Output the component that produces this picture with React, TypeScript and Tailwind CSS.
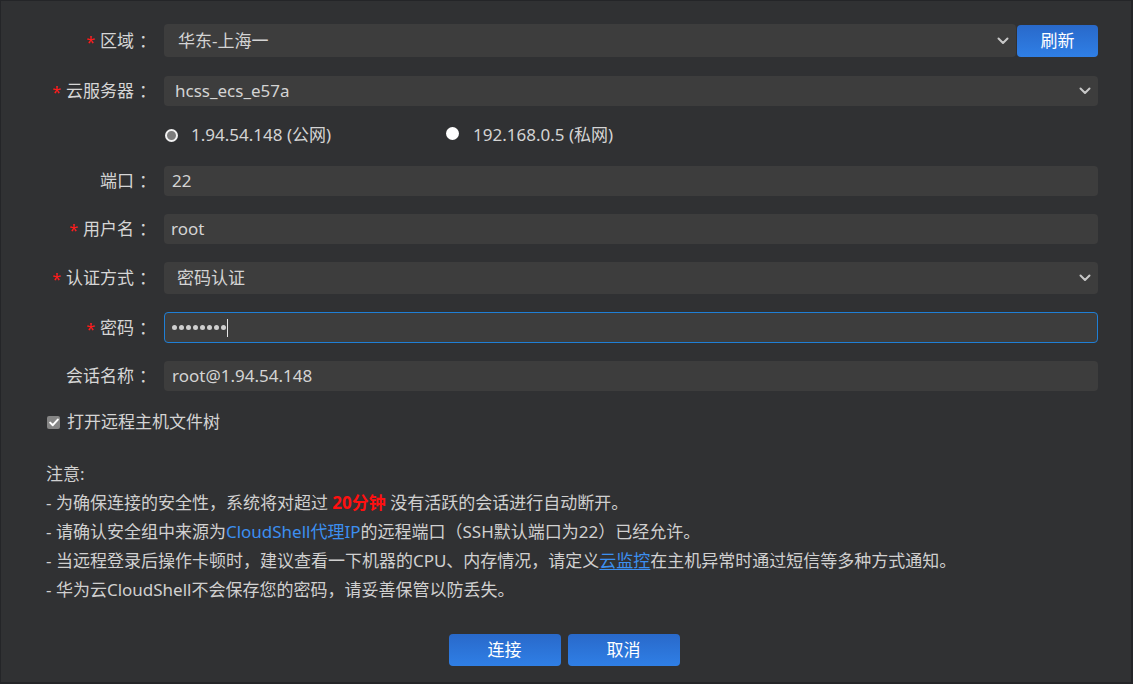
import React from "react";

const FONT = { fontFamily: '"Noto Sans", "Noto Sans CJK SC", sans-serif' };

function Chevron() {
  return (
    <svg width="12" height="8" viewBox="0 0 12 8" className="shrink-0">
      <path d="M1.5 1.5 L6 6 L10.5 1.5" fill="none" stroke="#c8c8c8" strokeWidth="2" strokeLinecap="round" strokeLinejoin="round" />
    </svg>
  );
}

function Label({ text, required }: { text: string; required?: boolean }) {
  return (
    <div className="w-[118px] shrink-0 flex items-center justify-end text-[17px] text-[#d6d6d6] whitespace-nowrap">
      {required && <span className="text-[#ff1a1a] text-[16px] mr-[5px] mt-[2px]">*</span>}
      <span>{text}</span>
      <span className="ml-[5px]">：</span>
    </div>
  );
}

function Field({ children, pl = "pl-[8px]" }: { children: React.ReactNode; pl?: string }) {
  return (
    <div className={`flex-1 h-[30px] bg-[#3d3d3d] rounded-[4px] flex items-center text-[17px] text-[#d4d4d4] ${pl}`}>
      {children}
    </div>
  );
}

const BTN =
  "h-[32px] rounded-[4px] bg-gradient-to-b from-[#2969ca] to-[#2f7fe6] text-white text-[17px] flex items-center justify-center";

export default function App() {
  return (
    <div
      style={FONT}
      className="w-[1133px] h-[684px] bg-[#303133] border-l border-t border-r-2 border-b-2 border-[#242528] flex flex-col pl-[37px] pr-[33px] leading-[22px] overflow-hidden"
    >
      {/* 区域 */}
      <div className="flex items-center mt-[23px] h-[33px] gap-2">
        <Label text="区域" required />
        <div className="flex-1 flex items-center gap-[1px]">
          <div className="flex-1 h-[33px] bg-[#3d3d3d] rounded-[4px] flex items-center justify-between pl-[14px] pr-[7px] text-[17px] text-[#d4d4d4]">
            <span>华东-上海一</span>
            <Chevron />
          </div>
          <button className={`w-[81px] ${BTN}`}>刷新</button>
        </div>
      </div>

      {/* 云服务器 */}
      <div className="flex items-center mt-[19px] h-[30px] gap-2">
        <Label text="云服务器" required />
        <div className="flex-1 h-[30px] bg-[#3d3d3d] rounded-[4px] flex items-center justify-between pl-[11px] pr-[7px] text-[17px] text-[#d4d4d4]">
          <span>hcss_ecs_e57a</span>
          <Chevron />
        </div>
      </div>

      {/* radios */}
      <div className="flex items-center mt-[14px] h-[30px] gap-2">
        <div className="w-[118px] shrink-0" />
        <div className="flex items-center">
          <div className="w-[282px] flex items-center pl-[1px]">
            <span className="w-[13px] h-[13px] rounded-full bg-[#7c7c7c] border-2 border-[#f2f2f2] shrink-0" />
            <span className="ml-[13px] text-[17px] text-[#d4d4d4]">1.94.54.148 (公网)</span>
          </div>
          <div className="flex items-center">
            <span className="w-[13px] h-[13px] rounded-full bg-white shrink-0 -mt-[3px]" />
            <span className="ml-[14px] text-[17px] text-[#d4d4d4]">192.168.0.5 (私网)</span>
          </div>
        </div>
      </div>

      {/* 端口 */}
      <div className="flex items-center mt-[16px] h-[30px] gap-2">
        <Label text="端口" />
        <Field>22</Field>
      </div>

      {/* 用户名 */}
      <div className="flex items-center mt-[18px] h-[30px] gap-2">
        <Label text="用户名" required />
        <Field pl="pl-[7px]">root</Field>
      </div>

      {/* 认证方式 */}
      <div className="flex items-center mt-[18px] h-[32px] gap-2">
        <Label text="认证方式" required />
        <div className="flex-1 h-[32px] bg-[#3d3d3d] rounded-[4px] flex items-center justify-between pl-[13px] pr-[7px] text-[17px] text-[#d4d4d4]">
          <span>密码认证</span>
          <Chevron />
        </div>
      </div>

      {/* 密码 */}
      <div className="flex items-center mt-[18px] h-[31px] gap-2">
        <Label text="密码" required />
        <div className="flex-1 h-[31px] bg-[#3d3d3d] rounded-[4px] border border-[#1f7fd6] flex items-center pl-[7px]">
          <div className="flex items-center gap-[2px]">
            {[0, 1, 2, 3, 4, 5, 6, 7].map((i) => (
              <span key={i} className="w-[5px] h-[5px] rounded-full bg-[#cfcfcf]" />
            ))}
          </div>
          <span className="w-[1px] h-[18px] bg-[#e6e6e6] ml-[1px]" />
        </div>
      </div>

      {/* 会话名称 */}
      <div className="flex items-center mt-[18px] h-[30px] gap-2">
        <Label text="会话名称" />
        <Field>root@1.94.54.148</Field>
      </div>

      {/* checkbox */}
      <div className="flex items-center mt-[21px] h-[20px] pl-[9px]">
        <span className="w-[13px] h-[13px] rounded-[2px] bg-[#858585] flex items-center justify-center shrink-0">
          <svg width="10" height="9" viewBox="0 0 10 9">
            <path d="M1.2 4.6 L3.8 7.2 L8.8 1.6" fill="none" stroke="#ffffff" strokeWidth="2" strokeLinecap="round" strokeLinejoin="round" />
          </svg>
        </span>
        <span className="ml-[7px] text-[17px] text-[#d4d4d4]">打开远程主机文件树</span>
      </div>

      {/* notes */}
      <div className="mt-[27px] pl-[8px] text-[17px] leading-[29px] text-[#d0d0d0]">
        <div>注意:</div>
        <div>
          - 为确保连接的安全性，系统将对超过 <span className="text-[#ff1010] font-bold">20分钟</span> 没有活跃的会话进行自动断开。
        </div>
        <div>
          - 请确认安全组中来源为<span className="text-[#3c8ff0]">CloudShell代理IP</span>的远程端口（SSH默认端口为22）已经允许。
        </div>
        <div>
          - 当远程登录后操作卡顿时，建议查看一下机器的CPU、内存情况，请定义
          <span className="text-[#3c8ff0] underline underline-offset-2">云监控</span>在主机异常时通过短信等多种方式通知。
        </div>
        <div>- 华为云CloudShell不会保存您的密码，请妥善保管以防丢失。</div>
      </div>

      {/* buttons */}
      <div className="flex justify-center gap-[7px] mt-[30px] pr-[8px]">
        <button className={`w-[112px] ${BTN}`}>连接</button>
        <button className={`w-[112px] ${BTN}`}>取消</button>
      </div>
    </div>
  );
}
